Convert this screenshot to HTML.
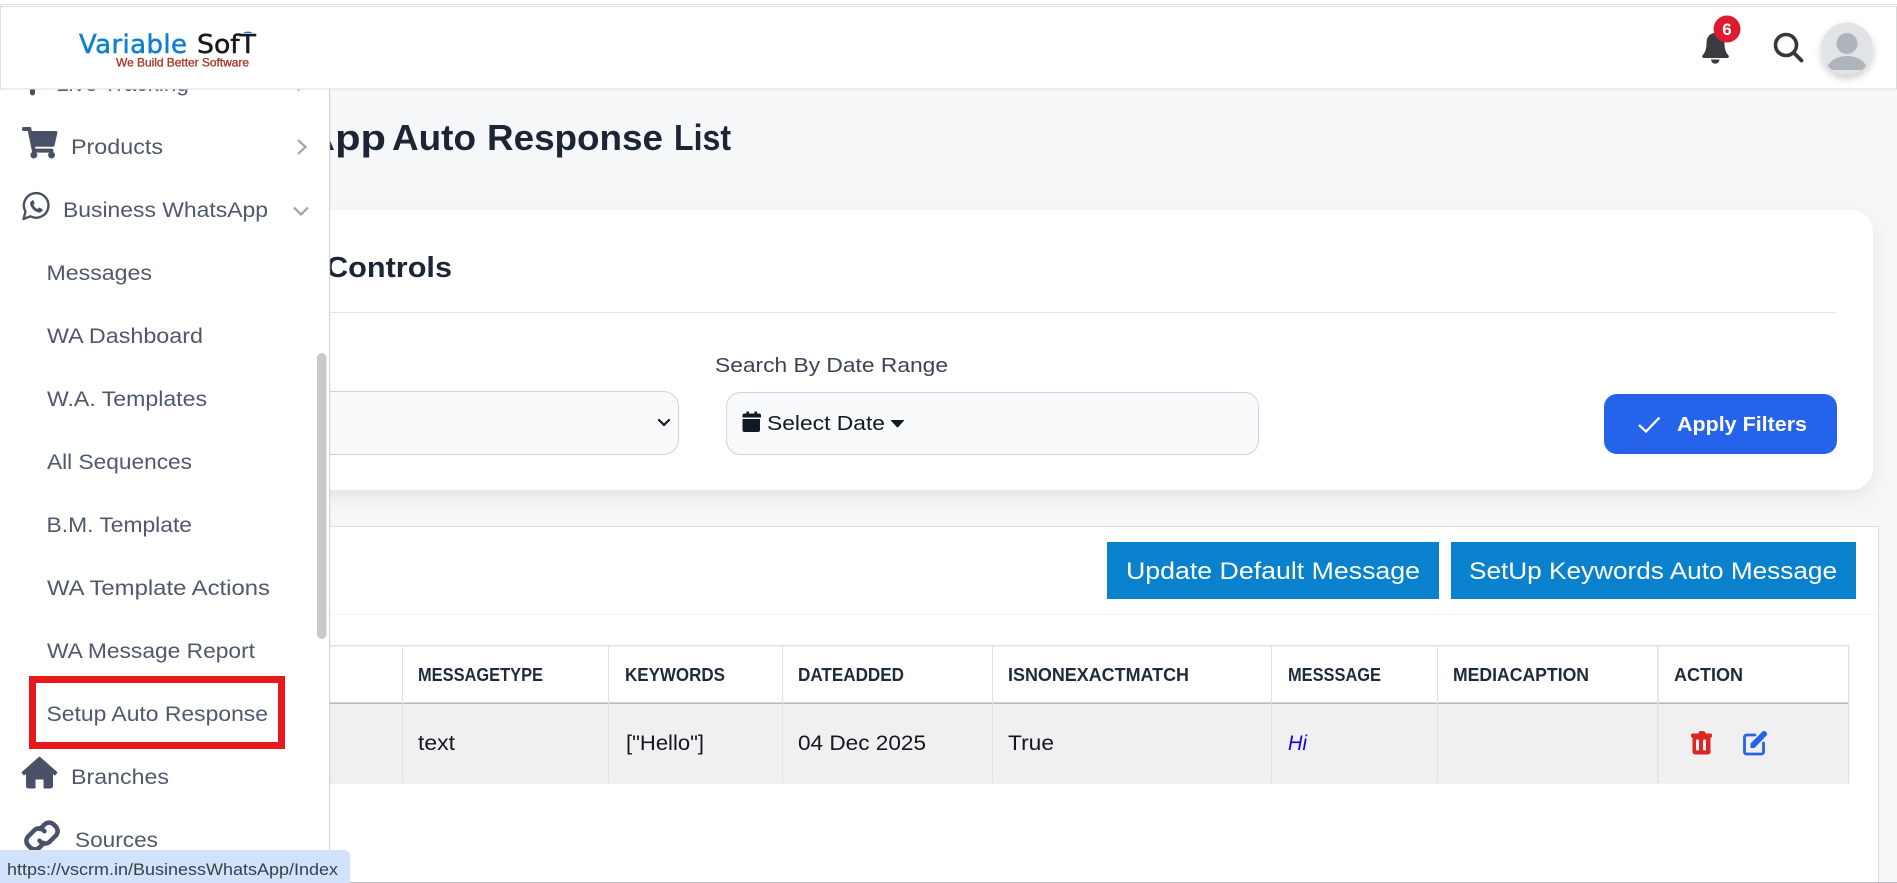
<!DOCTYPE html>
<html lang="en">
<head>
<meta charset="utf-8">
<title>WhatsApp Auto Response List</title>
<style>
html,body{margin:0;padding:0;width:1897px;height:883px;overflow:hidden;background:#fff}
svg{display:block;position:absolute;left:0;top:0}
text{font-family:"Liberation Sans",Arial,sans-serif;white-space:pre}
.nav{font-size:21px;fill:#4f586d}
.th{font-size:18px;font-weight:700;fill:#1f2a3d}
.td{font-size:21px;fill:#14171f}
.h1{font-size:36px;font-weight:700;fill:#1c2536}
</style>
</head>
<body>
<svg width="1897" height="883" viewBox="0 0 1897 883" xmlns="http://www.w3.org/2000/svg">
<defs>
<filter id="cardS" x="-10%" y="-20%" width="120%" height="150%"><feDropShadow dx="0" dy="8" stdDeviation="10" flood-color="#000" flood-opacity=".07"/></filter>
<filter id="avS" x="-40%" y="-40%" width="180%" height="180%"><feDropShadow dx="0" dy="4" stdDeviation="4" flood-color="#000" flood-opacity=".2"/></filter>
<clipPath id="avC"><circle cx="1847" cy="48.500" r="26"/></clipPath>
</defs>

<!-- page background -->
<rect width="1897" height="883" fill="#f6f7f9"/>

<!-- title -->
<text class="h1" x="305" y="150" textLength="81" lengthAdjust="spacingAndGlyphs">App</text>
<text class="h1" x="392" y="150" textLength="84" lengthAdjust="spacingAndGlyphs">Auto</text>
<text class="h1" x="487" y="150" textLength="176" lengthAdjust="spacingAndGlyphs">Response</text>
<text class="h1" x="674" y="150" textLength="57" lengthAdjust="spacingAndGlyphs">List</text>

<!-- filter card -->
<rect x="200" y="210" width="1673" height="280" rx="22" fill="#fff" filter="url(#cardS)"/>
<text x="326" y="277" font-size="29" font-weight="700" fill="#1c2536" textLength="126" lengthAdjust="spacingAndGlyphs">Controls</text>
<rect x="300" y="312" width="1537" height="1" fill="#e5e7eb"/>
<text x="715" y="372" font-size="20" fill="#3b4354" textLength="233" lengthAdjust="spacingAndGlyphs">Search By Date Range</text>

<rect x="250.500" y="391.500" width="428" height="63" rx="15" fill="#f8fafc" stroke="#cbd5e1"/>
<path d="M659 420l5 5 5-5" fill="none" stroke="#14171f" stroke-width="2.200" stroke-linecap="round" stroke-linejoin="round"/>

<rect x="726.500" y="392.500" width="532" height="62" rx="14" fill="#f8fafc" stroke="#cbd5e1"/>
<path d="M742.500 417.500v-2a2 2 0 0 1 2-2h2v-2h2.500v2h5.500v-2h2.500v2h2a2 2 0 0 1 2 2v2zM742.500 419h17.500v11a2 2 0 0 1-2 2h-13.500a2 2 0 0 1-2-2z" fill="#111827"/>
<text x="767" y="430" font-size="20.500" fill="#111827" textLength="118" lengthAdjust="spacingAndGlyphs">Select Date</text>
<path d="M891.500 420.500h12l-6 6.500z" fill="#111827" stroke="#111827" stroke-width="1" stroke-linejoin="round"/>

<rect x="1604" y="394" width="233" height="60" rx="13" fill="#2563eb"/>
<path d="M1639 425l7 6.500 13.500-14" fill="none" stroke="#fff" stroke-width="2.300"/>
<text x="1677" y="431" font-size="20.500" font-weight="700" fill="#fff" textLength="130" lengthAdjust="spacingAndGlyphs">Apply Filters</text>

<!-- list panel -->
<rect x="300.500" y="526.500" width="1578" height="370" fill="#fff" stroke="#dcdee1"/>
<rect x="301" y="614" width="1577" height="1" fill="#f3f4f6"/>
<rect x="1107" y="542" width="332" height="57" fill="#0a81cc"/>
<rect x="1451" y="542" width="405" height="57" fill="#0a81cc"/>
<text x="1126" y="579" font-size="24" fill="#fff" textLength="294" lengthAdjust="spacingAndGlyphs">Update Default Message</text>
<text x="1469" y="579" font-size="24" fill="#fff" textLength="368" lengthAdjust="spacingAndGlyphs">SetUp Keywords Auto Message</text>

<!-- table -->
<rect x="330" y="703" width="1519" height="80" fill="#f0f0f0"/>
<rect x="330" y="645" width="1519" height="1.500" fill="#dee2e6"/>
<rect x="330" y="702.500" width="1519" height="1.300" fill="#a9abae"/>
<rect x="330" y="782.500" width="1519" height="1" fill="#e6e7e9"/>
<g fill="#dee2e6">
<rect x="402" y="646" width="1" height="137"/>
<rect x="608" y="646" width="1" height="137"/>
<rect x="782" y="646" width="1" height="137"/>
<rect x="992" y="646" width="1" height="137"/>
<rect x="1271" y="646" width="1" height="137"/>
<rect x="1437" y="646" width="1" height="137"/>
<rect x="1657" y="646" width="1.500" height="137"/>
<rect x="1848" y="646" width="1.200" height="137"/>
</g>
<text class="th" x="418" y="681" textLength="125" lengthAdjust="spacingAndGlyphs">MESSAGETYPE</text>
<text class="th" x="625" y="681" textLength="100" lengthAdjust="spacingAndGlyphs">KEYWORDS</text>
<text class="th" x="798" y="681" textLength="106" lengthAdjust="spacingAndGlyphs">DATEADDED</text>
<text class="th" x="1008" y="681" textLength="181" lengthAdjust="spacingAndGlyphs">ISNONEXACTMATCH</text>
<text class="th" x="1288" y="681" textLength="93" lengthAdjust="spacingAndGlyphs">MESSSAGE</text>
<text class="th" x="1453" y="681" textLength="136" lengthAdjust="spacingAndGlyphs">MEDIACAPTION</text>
<text class="th" x="1674" y="681" textLength="69" lengthAdjust="spacingAndGlyphs">ACTION</text>
<text class="td" x="418" y="750" textLength="37" lengthAdjust="spacingAndGlyphs">text</text>
<text class="td" x="626" y="750" textLength="78" lengthAdjust="spacingAndGlyphs">["Hello"]</text>
<text class="td" x="798" y="750" textLength="128" lengthAdjust="spacingAndGlyphs">04 Dec 2025</text>
<text class="td" x="1008" y="750" textLength="46" lengthAdjust="spacingAndGlyphs">True</text>
<text x="1288" y="750" font-size="21" font-style="italic" fill="#1400e6" textLength="19" lengthAdjust="spacingAndGlyphs">Hi</text>

<!-- trash icon -->
<path fill-rule="evenodd" d="M1698 733.500l1-1.500a2 2 0 0 1 1.500-1h3a2 2 0 0 1 1.500 1l1 1.500h4.500a1.500 1.500 0 0 1 1.500 1.500v1.500a1 1 0 0 1-1 1h-.5v14.500a2.500 2.500 0 0 1-2.500 2.500h-13a2.500 2.500 0 0 1-2.500-2.500v-14.500h-.5a1 1 0 0 1-1-1v-1.500a1.500 1.500 0 0 1 1.500-1.500zM1697 739.500a1 1 0 0 0-1 1v9a1 1 0 0 0 1 1h1a1 1 0 0 0 1-1v-9a1 1 0 0 0-1-1zM1704 739.500a1 1 0 0 0-1 1v9a1 1 0 0 0 1 1h1a1 1 0 0 0 1-1v-9a1 1 0 0 0-1-1z" fill="#dc2626"/>
<!-- edit icon -->
<path d="M1755 735h-8.500a2 2 0 0 0-2 2v15a2 2 0 0 0 2 2h15a2 2 0 0 0 2-2v-9" fill="none" stroke="#2563eb" stroke-width="2.800" stroke-linecap="round"/>
<path d="M1750.500 748v-4.500l12-12a2 2 0 0 1 3 0l1 1a2 2 0 0 1 0 3l-12 12.500z" fill="#2563eb"/>

<!-- sidebar -->
<rect x="0" y="85" width="329" height="798" fill="#fff"/>
<rect x="329" y="85" width="1.200" height="798" fill="#d2d4d7"/>
<rect x="317" y="353" width="9.500" height="286" rx="5" fill="#c9c9c9"/>

<!-- live tracking partial -->
<rect x="30" y="86" width="5" height="9.500" rx="2.500" fill="#4a5068"/>
<text class="nav" x="56" y="91" textLength="133" lengthAdjust="spacingAndGlyphs">Live Tracking</text>
<rect x="298" y="89" width="1.500" height="2" fill="#9ca3af"/>

<!-- cart -->
<svg x="22" y="127" width="35.500" height="31.500" viewBox="0 0 576 512"><path fill="#4a5068" d="M528.12 301.319l47.273-208C578.806 78.301 567.391 64 551.99 64H159.208l-9.166-44.81C147.758 8.021 137.93 0 126.529 0H24C10.745 0 0 10.745 0 24v16c0 13.255 10.745 24 24 24h69.883l70.248 343.435C147.325 417.1 136 435.222 136 456c0 30.928 25.072 56 56 56s56-25.072 56-56c0-15.674-6.447-29.835-16.824-40h209.647C430.447 426.165 424 440.326 424 456c0 30.928 25.072 56 56 56s56-25.072 56-56c0-22.172-12.888-41.332-31.579-50.405l5.517-24.276c3.413-15.018-8.002-29.319-23.403-29.319H218.117l-6.545-32h293.145c11.206 0 20.920-7.754 23.403-18.681z"/></svg>
<text class="nav" x="71" y="154" textLength="92" lengthAdjust="spacingAndGlyphs">Products</text>
<path d="M298 140l7.500 7-7.500 7" fill="none" stroke="#9ca3af" stroke-width="2.200"/>

<!-- whatsapp -->
<g transform="translate(0,1.500)">
<path d="M23.500 217.500l2-7.500a12.300 12.300 0 1 1 5 4.800z" fill="none" stroke="#4a5068" stroke-width="2.400" stroke-linejoin="round"/>
<path d="M31.500 199.500c-1.500 1-1.800 3-.8 5 1.500 3 4 5.300 7 6.300 2 .7 3.800 0 4.700-1.500l.3-1.500-3.500-1.800-1.500 1.500c-2-.8-3.500-2.300-4.300-4.300l1.300-1.500-1.500-3.300z" fill="#4a5068"/>
</g>
<text class="nav" x="63" y="217" textLength="205" lengthAdjust="spacingAndGlyphs">Business WhatsApp</text>
<path d="M294 207.500l7 7 7-7" fill="none" stroke="#9ca3af" stroke-width="2.200"/>

<text class="nav" x="46.500" y="280" textLength="105.500" lengthAdjust="spacingAndGlyphs">Messages</text>
<text class="nav" x="47" y="343" textLength="156" lengthAdjust="spacingAndGlyphs">WA Dashboard</text>
<text class="nav" x="47" y="406" textLength="160" lengthAdjust="spacingAndGlyphs">W.A. Templates</text>
<text class="nav" x="47" y="469" textLength="145" lengthAdjust="spacingAndGlyphs">All Sequences</text>
<text class="nav" x="46.500" y="532" textLength="145.500" lengthAdjust="spacingAndGlyphs">B.M. Template</text>
<text class="nav" x="47" y="595" textLength="223" lengthAdjust="spacingAndGlyphs">WA Template Actions</text>
<text class="nav" x="47" y="658" textLength="208" lengthAdjust="spacingAndGlyphs">WA Message Report</text>
<text class="nav" x="46.500" y="721" textLength="221.500" lengthAdjust="spacingAndGlyphs">Setup Auto Response</text>
<rect x="32.500" y="679.500" width="249" height="66" fill="none" stroke="#e8191c" stroke-width="7"/>

<!-- home -->
<path d="M39.500 757l17.500 15.500-2 2.500-2.500-2v13a2 2 0 0 1-2 2h-6.500v-9h-9v9h-6.500a2 2 0 0 1-2-2v-13l-2.500 2-2-2.500z" fill="#4a5068" stroke="#4a5068" stroke-width="1" stroke-linejoin="round"/>
<text class="nav" x="71" y="784" textLength="98" lengthAdjust="spacingAndGlyphs">Branches</text>

<!-- link -->
<g fill="none" stroke="#4a5068" stroke-width="4.500" stroke-linecap="round">
<path d="M40 829l4.500-4.500a6.500 6.500 0 0 1 9.200 0l2 2a6.500 6.500 0 0 1 0 9.200l-6 6a6.500 6.500 0 0 1-9.200 0l-1-1"/>
<path d="M44 843l-4.500 4.500a6.500 6.500 0 0 1-9.200 0l-2-2a6.500 6.500 0 0 1 0-9.200l6-6a6.500 6.500 0 0 1 9.200 0l1 1"/>
</g>
<text class="nav" x="75" y="847" textLength="83" lengthAdjust="spacingAndGlyphs">Sources</text>

<!-- bottom frame line -->
<rect x="0" y="882" width="1897" height="1" fill="#b5b8bc"/>

<!-- status bubble -->
<path d="M0 850h344a6 6 0 0 1 6 6v27H0z" fill="#d2e2fb"/>
<text x="7" y="875" font-size="17" fill="#3a3f47" textLength="331" lengthAdjust="spacingAndGlyphs">https://vscrm.in/BusinessWhatsApp/Index</text>

<!-- top header -->
<rect x="0" y="0" width="1897" height="4" fill="#fff"/>
<rect x="0" y="4" width="1897" height="1" fill="#e0e0e0"/>
<rect x="0" y="5" width="1897" height="1" fill="#fff"/>
<rect x="0.500" y="6.500" width="1896" height="82.500" fill="#fff" stroke="#dcdcdc"/>

<!-- logo -->
<text x="79" y="53" font-size="26" style="font-family:'DejaVu Sans',sans-serif" fill="#0f80cf" stroke="#0f80cf" stroke-width=".5" textLength="108" lengthAdjust="spacing">Variable</text>
<text x="197" y="53" font-size="26" style="font-family:'DejaVu Sans',sans-serif" fill="#16181c" stroke="#16181c" stroke-width=".5" textLength="59" lengthAdjust="spacingAndGlyphs">SofT</text>
<path d="M243 33q5-3 10 0z" fill="#0f80cf"/>
<text x="116" y="66.500" font-size="12" fill="#a53a2a" stroke="#a53a2a" stroke-width=".35" textLength="133" lengthAdjust="spacing">We Build Better Software</text>

<!-- bell -->
<path d="M1715.500 33c-6.500 0-9 5-9 10 0 5.500-1 9-4 12.500a1.500 1.500 0 0 0 1 2.500h24a1.500 1.500 0 0 0 1-2.500c-3-3.500-4-7-4-12.500 0-5-2.500-10-9-10z" fill="#383c40"/>
<path d="M1711 59.500h8.500a4.200 4.200 0 0 1-8.500 0z" fill="#383c40"/>
<circle cx="1727" cy="29" r="13.500" fill="#dc1c2e"/>
<text x="1727" y="35" text-anchor="middle" font-size="17" font-weight="700" fill="#fff">6</text>

<!-- search -->
<circle cx="1786" cy="45" r="10.500" fill="none" stroke="#33383c" stroke-width="3.600"/>
<path d="M1794 53l7.500 7.500" fill="none" stroke="#33383c" stroke-width="3.800" stroke-linecap="round"/>

<!-- avatar -->
<circle cx="1847" cy="48.500" r="26" fill="#e1e3e5" filter="url(#avS)"/>
<g clip-path="url(#avC)">
<circle cx="1847" cy="43.500" r="10.500" fill="#adb5bb"/>
<path d="M1827 70a20 14 0 0 1 40 0z" fill="#adb5bb"/>
</g>
</svg>
</body>
</html>
